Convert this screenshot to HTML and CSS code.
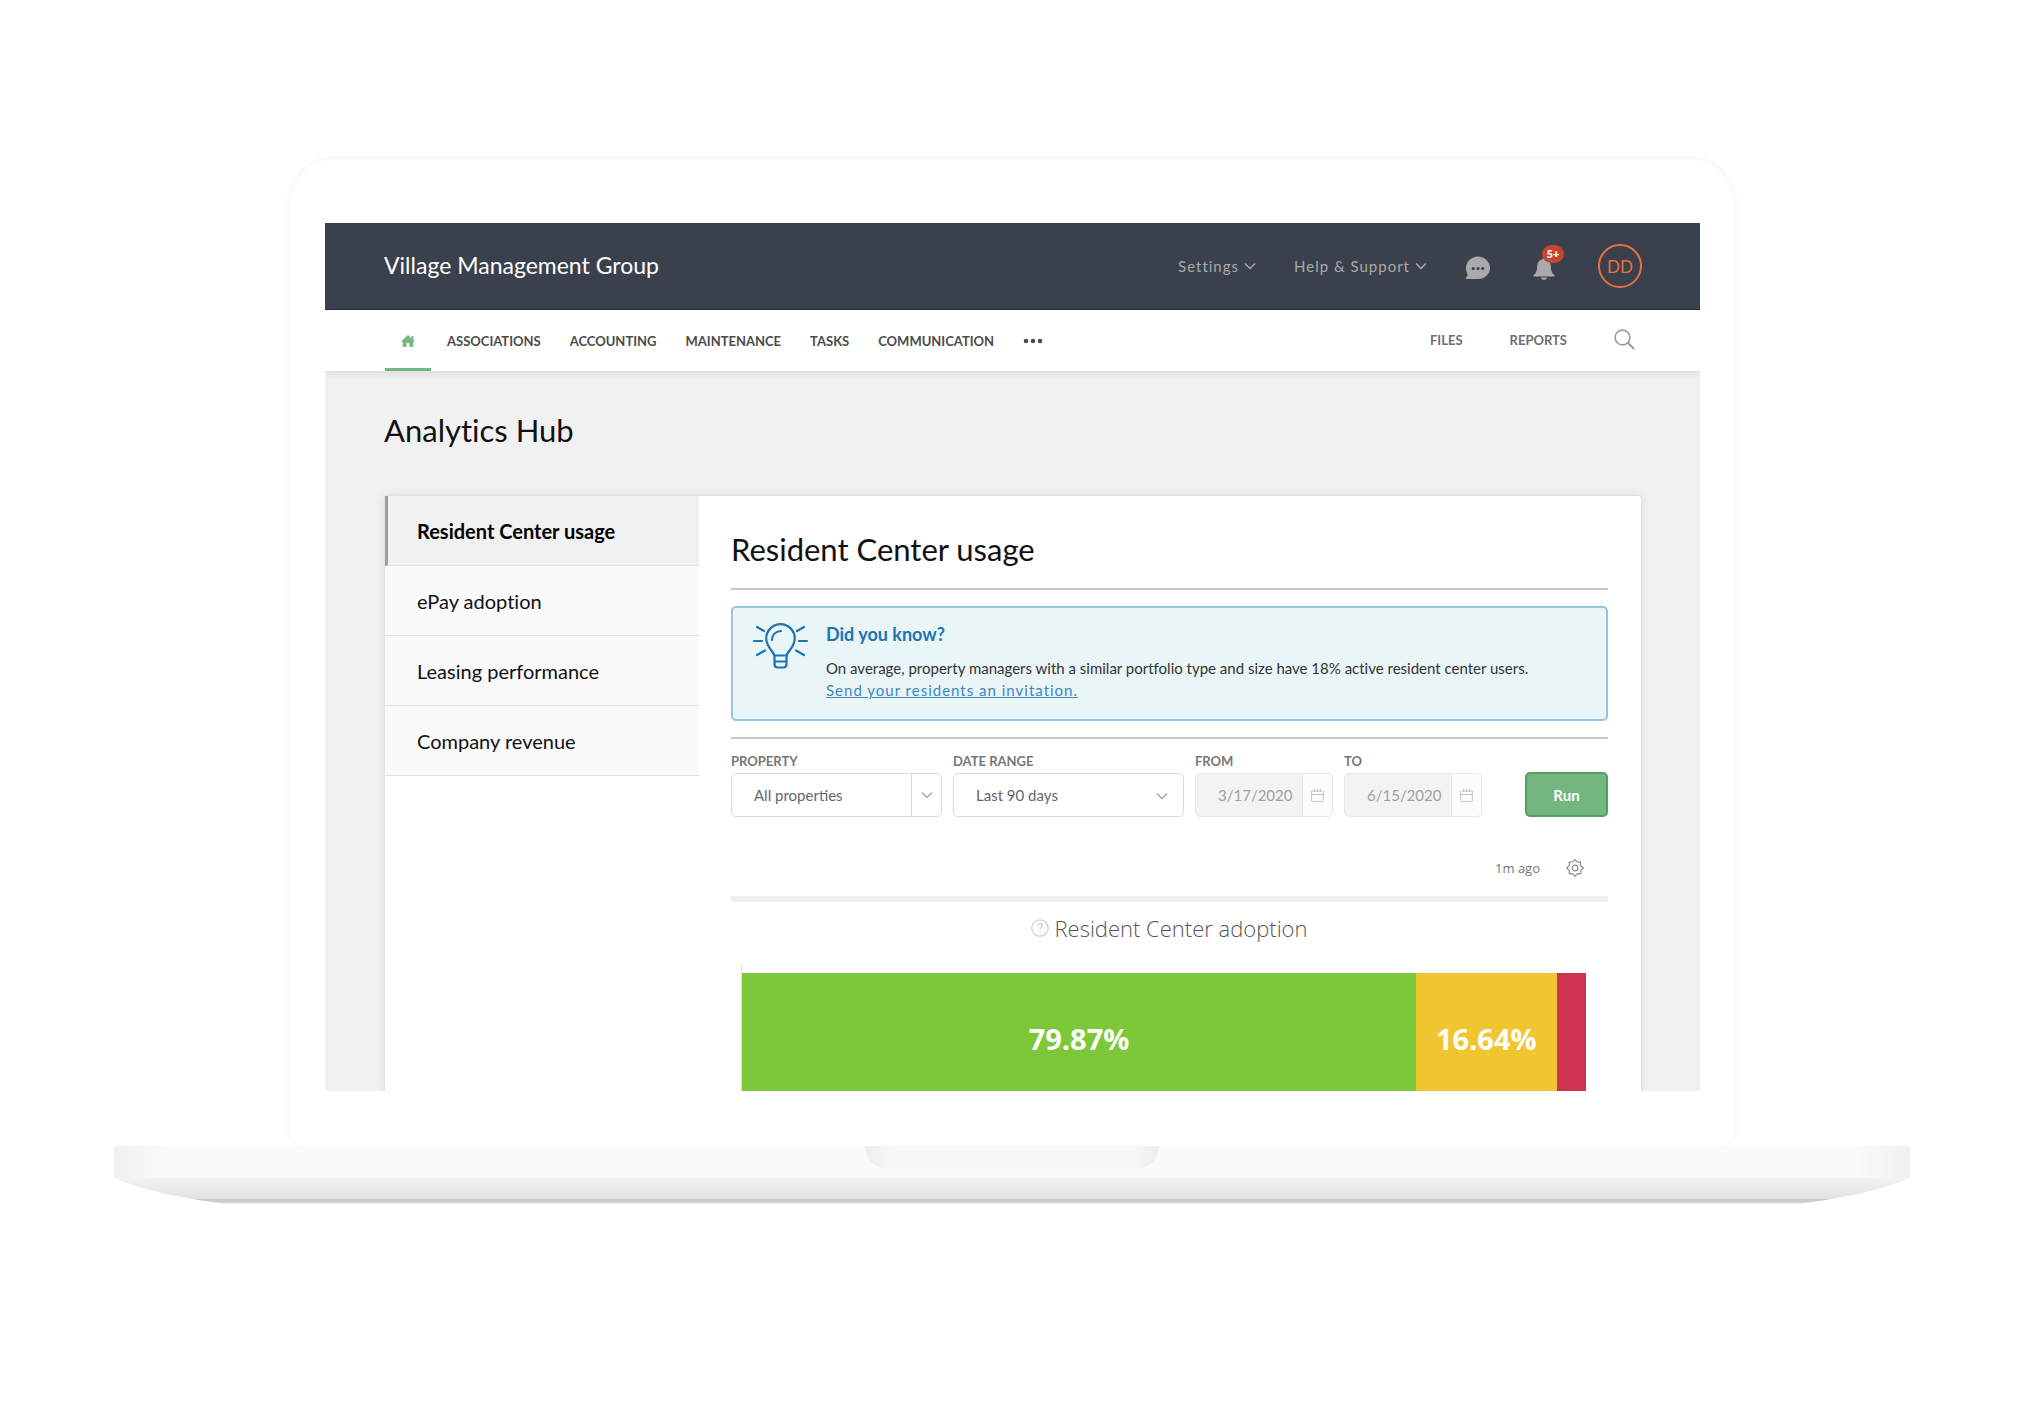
FILE: index.html
```html
<!DOCTYPE html>
<html lang="en">
<head>
    <meta charset="UTF-8">
    <meta name="viewport" content="width=device-width, initial-scale=1.0">
    <title>Analytics Hub</title>
    <link rel="stylesheet" href="styles.css">
</head>
<body>

<div class="laptop">
    <div class="lid">
        <div class="screen">

            <!-- Top bar -->
            <header class="topbar">
                <div class="company">Village Management Group</div>
                <div class="topbar-menu">
                    <button class="menu-btn">Settings
                        <svg class="chevron" viewBox="0 0 12 8"><path d="M1 1.5l5 5 5-5"/></svg>
                    </button>
                    <button class="menu-btn">Help &amp; Support
                        <svg class="chevron" viewBox="0 0 12 8"><path d="M1 1.5l5 5 5-5"/></svg>
                    </button>
                    <button class="icon-btn chat" aria-label="Messages">
                        <svg width="25" height="24" viewBox="0 0 25 24">
                            <path fill="#a9a9a9" d="M13 .5C6.500.5 1 5.500 1 12c0 2.800.8 5 1.800 6.700L.8 22c-.4.600-.1 1 .5 1h11.700c6.500 0 12-4.800 12-11S19.500.5 13 .5z"/>
                            <circle cx="8.200" cy="12.500" r="1.600" fill="#3b404d"/>
                            <circle cx="13" cy="12.500" r="1.600" fill="#3b404d"/>
                            <circle cx="17.800" cy="12.500" r="1.600" fill="#3b404d"/>
                        </svg>
                    </button>
                    <button class="icon-btn bell" aria-label="Notifications">
                        <svg width="22" height="23" viewBox="0 0 22 23">
                            <path fill="#a9a9a9" d="M9 2.500C9 1 13 1 13 2.500c3.500 1 4.700 3.800 4.900 7.500.2 4 .9 6 3.200 7.800.9.700.6 1.700-.4 1.700H1.300c-1 0-1.300-1-.4-1.700C3.200 16 3.900 14 4.100 10c.2-3.700 1.400-6.500 4.900-7.500zM8 20.500h6c0 1.500-1.300 2.300-3 2.300s-3-.8-3-2.300z"/>
                        </svg>
                        <span class="badge">5+</span>
                    </button>
                    <button class="avatar">DD</button>
                </div>
            </header>

            <!-- Main navigation -->
            <nav class="navbar">
                <div class="nav-left">
                    <a href="#home" class="home" aria-label="Home">
                        <svg width="14" height="12" viewBox="0 0 14 12"><path fill="#74b780" d="M7 0L0 6.500h1.700V12h3.800V8h3v4h3.800V6.500H14l-1.600-1.500V1h-2v2.200z"/></svg>
                    </a>
                    <a href="#associations">ASSOCIATIONS</a>
                    <a href="#accounting">ACCOUNTING</a>
                    <a href="#maintenance">MAINTENANCE</a>
                    <a href="#tasks">TASKS</a>
                    <a href="#communication">COMMUNICATION</a>
                    <a href="#more" aria-label="More">
                        <svg width="20" height="6" viewBox="0 0 20 6" fill="#4b4b4b"><circle cx="3" cy="3" r="2.300"/><circle cx="10" cy="3" r="2.300"/><circle cx="17" cy="3" r="2.300"/></svg>
                    </a>
                </div>
                <div class="nav-right">
                    <a href="#files">FILES</a>
                    <a href="#reports">REPORTS</a>
                    <button class="icon-btn" aria-label="Search">
                        <svg width="21" height="21" viewBox="0 0 21 21" fill="none" stroke="#9c9c9c" stroke-width="1.700"><circle cx="8.500" cy="8.500" r="7.400"/><path d="M13.800 13.800l6.200 6.200" stroke-width="2"/></svg>
                    </button>
                </div>
            </nav>

            <!-- Page -->
            <main class="page">
                <h1>Analytics Hub</h1>

                <div class="card">
                    <aside class="sidebar">
                        <a href="#resident" class="selected">Resident Center usage</a>
                        <a href="#epay">ePay adoption</a>
                        <a href="#leasing">Leasing performance</a>
                        <a href="#revenue">Company revenue</a>
                    </aside>

                    <section class="content">
                        <h2>Resident Center usage</h2>

                        <div class="tip">
                            <svg class="bulb" width="56" height="46" viewBox="0 0 56 46">
                                <path d="M21.500 32.500c-.6-3.500-8.300-8.500-8.300-17a14.300 14.300 0 0 1 28.600 0c0 8.500-7.700 13.500-8.300 17z"/>
                                <path d="M19 17c0-5 3.500-8.500 9-9"/>
                                <path d="M21.500 32.500v8.500c0 2 1 3.500 3 3.500h6c2 0 3-1.500 3-3.500v-8.500M21.500 38.500h12"/>
                                <path d="M1 18h8M46 18h8M4 4l7 4M51 4l-7 4M4 32l8-4.500M51 32l-8-4.500"/>
                            </svg>
                            <div>
                                <h3>Did you know?</h3>
                                <p>On average, property managers with a similar portfolio type and size have 18% active resident center users.</p>
                                <p><a href="#invite">Send your residents an invitation.</a></p>
                            </div>
                        </div>

                        <form class="filters">
                            <div class="field property">
                                <label for="property">PROPERTY</label>
                                <div class="control">
                                    <select id="property"><option>All properties</option></select>
                                    <span class="addon"><svg class="chevron" viewBox="0 0 12 8"><path d="M1 1.500l5 5 5-5"/></svg></span>
                                </div>
                            </div>
                            <div class="field range">
                                <label for="range">DATE RANGE</label>
                                <div class="control">
                                    <select id="range"><option>Last 90 days</option></select>
                                    <span class="arrow"><svg class="chevron" viewBox="0 0 12 8"><path d="M1 1.500l5 5 5-5"/></svg></span>
                                </div>
                            </div>
                            <div class="field date">
                                <label for="from">FROM</label>
                                <div class="control disabled">
                                    <input type="text" id="from" value="3/17/2020" disabled>
                                    <span class="addon">
                                        <svg width="13" height="13" viewBox="0 0 13 13" fill="none" stroke="#c4c4c4"><rect x=".6" y="2" width="11.800" height="10.400" rx="1"/><path d="M.6 5.500h11.800M3.500 0v3M6.500 0v3M9.500 0v3"/></svg>
                                    </span>
                                </div>
                            </div>
                            <div class="field date">
                                <label for="to">TO</label>
                                <div class="control disabled">
                                    <input type="text" id="to" value="6/15/2020" disabled>
                                    <span class="addon">
                                        <svg width="13" height="13" viewBox="0 0 13 13" fill="none" stroke="#c4c4c4"><rect x=".6" y="2" width="11.800" height="10.400" rx="1"/><path d="M.6 5.500h11.800M3.500 0v3M6.500 0v3M9.500 0v3"/></svg>
                                    </span>
                                </div>
                            </div>
                            <button type="button" class="run">Run</button>
                        </form>

                        <div class="report-tools">
                            <span>1m ago</span>
                            <button class="icon-btn" aria-label="Report settings">
                                <svg width="18" height="18" viewBox="0 0 18 18" fill="none" stroke="#8c8c8c" stroke-width="1.200">
                                    <path stroke-linejoin="round" d="M9 .7l1.800 2 .7.300 2.700-.2.300.3-.2 2.700.3.700L17.300 9l-2.300 2.100-.3.700.2 2.700-.5.400-2.600-.2-.8.400L9 17.300l-1.900-2.200-.8-.4-2.700.2-.4-.4.200-2.700-.4-.7L.7 9l2.300-2.300.4-.7-.2-2.800.4-.4 2.700.2.700-.3z"/>
                                    <circle cx="9" cy="9" r="2.800"/>
                                </svg>
                            </button>
                        </div>

                        <div class="chart">
                            <div class="chart-title">
                                <svg width="18" height="18" viewBox="0 0 18 18" fill="none" stroke="#cfcfcf" stroke-width="1.200"><circle cx="9" cy="9" r="8.200"/><path d="M6.800 7c0-3 4.500-3 4.500-.3 0 1.600-2.200 1.800-2.200 3.600M9.100 11.800v1.400"/></svg>
                                Resident Center adoption
                            </div>
                            <div class="plot">
                                <div class="bar green" style="width: 79.87%">79.87%</div>
                                <div class="bar yellow" style="width: 16.64%">16.64%</div>
                                <div class="bar red" style="width: 3.49%"></div>
                            </div>
                        </div>
                    </section>
                </div>
            </main>

        </div>
    </div>

    <!-- Laptop base -->
    <div class="deck"><div class="notch"></div></div>
    <svg class="underside" viewBox="0 0 1796 26" preserveAspectRatio="none">
        <defs>
            <linearGradient id="shade" x1="0" y1="0" x2="0" y2="1">
                <stop offset="0" stop-color="#f2f2f2"/>
                <stop offset=".8" stop-color="#e3e3e3"/>
                <stop offset=".8" stop-color="#c6c6c6"/>
                <stop offset=".92" stop-color="#cfcfcf"/>
                <stop offset="1" stop-color="#f4f4f4"/>
            </linearGradient>
        </defs>
        <path fill="url(#shade)" d="M0 0C30 12 60 19 112 26H1684C1736 19 1766 12 1796 0Z"/>
    </svg>
</div>

</body>
</html>
```
FILE: styles.css
```css
/* Reset */
* {
    margin: 0;
    padding: 0;
    box-sizing: border-box;
}

body {
    background-color: #fff;
    color: #111;
    font-family: Lato, "Open Sans", sans-serif;
    font-variant-ligatures: none;
}

a {
    color: inherit;
    text-decoration: none;
}

button {
    font-family: inherit;
    background: none;
    border: none;
    cursor: pointer;
}

svg {
    display: block;
}

/* Laptop */
.laptop {
    padding: 156px 113px 0 114px;
}

.lid {
    margin: 0 173px;
    padding: 63px 33px 55px 34px;
    border: 4px solid #fafafa;
    border-bottom: none;
    border-radius: 46px 46px 16px 16px;
}

.screen {
    background-color: #f1f1f1;
    overflow: hidden;
}

.deck {
    height: 32px;
    background: linear-gradient(90deg, #f0f0f0, #fafafa 54px, #fafafa calc(100% - 54px), #f0f0f0);
}

.notch {
    width: 294px;
    height: 23px;
    margin: 0 auto;
    border-radius: 0 0 24px 24px;
    background: linear-gradient(90deg, #ececec, #f7f7f7 24px, #f7f7f7 calc(100% - 24px), #ececec);
}

.underside {
    width: 100%;
    height: 26px;
}

/* Top bar */
.topbar {
    display: flex;
    justify-content: space-between;
    align-items: center;
    height: 87px;
    padding: 0 58px 0 59px;
    background-color: #3b404d;
    border-bottom: 1px solid #2b2e3c;
}

.company {
    padding-bottom: 2px;
    font-size: 23px;
    color: #fff;
}

.topbar-menu {
    display: flex;
    align-items: center;
}

.menu-btn {
    display: flex;
    align-items: center;
    gap: 5px;
    margin-right: 38px;
    font-size: 15px;
    letter-spacing: 1px;
    color: #a9a9a9;
}

.chevron {
    width: 12px;
    height: 8px;
    fill: none;
    stroke: #a9a9a9;
    stroke-width: 1.5;
}

.chat,
.bell {
    padding-top: 4px;
    margin-right: 43px;
}

.bell {
    position: relative;
}

.badge {
    position: absolute;
    top: -8px;
    left: 9px;
    width: 22px;
    height: 18px;
    border-radius: 9px;
    background-color: #c64532;
    color: #fff;
    font-size: 11px;
    font-weight: 900;
    line-height: 18px;
}

.avatar {
    width: 44px;
    height: 44px;
    border: 2px solid #ec6f42;
    border-radius: 50%;
    color: #ec6f42;
    font-size: 17px;
}

/* Navigation */
.navbar {
    position: relative;
    display: flex;
    justify-content: space-between;
    height: 61px;
    padding: 0 65px 0 60px;
    background-color: #fff;
    box-shadow: 0 2px 8px rgba(0, 0, 0, 0.1);
    font-size: 13px;
    font-weight: bold;
    color: #4b4b4b;
}

.nav-left,
.nav-right {
    display: flex;
    align-items: center;
    gap: 29px;
}

.nav-right {
    gap: 47px;
    padding-bottom: 2px;
    color: #6e6e6e;
}

.home {
    display: flex;
    align-items: center;
    justify-content: center;
    width: 46px;
    height: 61px;
    margin-right: -13px;
    border-top: 3px solid transparent;
    border-bottom: 3px solid #74b780;
}

/* Page */
.page {
    padding: 38px 58px 0 59px;
}

h1,
h2 {
    font-size: 31px;
    font-weight: normal;
    line-height: 42px;
}

.card {
    display: flex;
    margin-top: 44px;
    background-color: #fff;
    border: 1px solid #e2e2e2;
    border-bottom: none;
    border-radius: 4px 4px 0 0;
    box-shadow: 0 0 12px rgba(0, 0, 0, 0.08);
}

.sidebar {
    width: 314px;
}

.sidebar a {
    display: flex;
    align-items: center;
    height: 70px;
    padding-left: 32px;
    background-color: #fafafa;
    border-bottom: 1px solid #e2e2e2;
    font-size: 20px;
}

.sidebar .selected {
    padding-left: 29px;
    border-left: 3px solid #9c9c9c;
    background-color: #f1f1f1;
    color: #000;
    font-weight: bold;
}

.content {
    flex: 1;
    padding: 32px 33px 0 32px;
}

.content h2 {
    padding-bottom: 18px;
    border-bottom: 2px solid #c8c8c8;
}

/* Tip box */
.tip {
    display: flex;
    gap: 17px;
    margin: 16px 0;
    padding: 15px 20px 18px;
    background-color: #eaf5f8;
    border: 2px solid #95c5e2;
    border-radius: 5px;
    font-size: 15px;
    line-height: 22px;
    color: #333;
}

.bulb {
    fill: none;
    stroke: #1b74b4;
    stroke-width: 2.2;
    stroke-linecap: round;
    stroke-linejoin: round;
}

.tip h3 {
    margin-bottom: 12px;
    font-size: 18px;
    color: #1b74b4;
}

.tip a {
    color: #3d87bd;
    letter-spacing: 1px;
    text-decoration: underline;
}

/* Filters */
.filters {
    display: flex;
    align-items: flex-end;
    gap: 11px;
    padding-top: 14px;
    border-top: 2px solid #c8c8c8;
}

.field label {
    display: block;
    margin-bottom: 4px;
    font-size: 13px;
    font-weight: bold;
    line-height: 16px;
    color: #777;
}

.control {
    position: relative;
    display: flex;
    height: 44px;
    border: 1px solid #dcdcdc;
    border-radius: 5px;
    background-color: #fff;
    overflow: hidden;
}

.property {
    width: 211px;
}

.range {
    width: 231px;
}

.date {
    width: 138px;
}

.control.disabled {
    border-color: #e8e8e8;
    background-color: #f3f3f3;
}

.control select,
.control input {
    flex: 1;
    min-width: 0;
    padding-left: 22px;
    appearance: none;
    border: none;
    background: none;
    font-family: inherit;
    font-size: 15px;
    color: #666;
}

.control input {
    color: #a0a0a0;
}

.addon {
    display: flex;
    align-items: center;
    justify-content: center;
    width: 30px;
    border-left: 1px solid #dcdcdc;
}

.disabled .addon {
    border-color: #e8e8e8;
    background-color: #fcfcfc;
}

.arrow {
    position: absolute;
    top: 18px;
    right: 15px;
    pointer-events: none;
}

.run {
    width: 83px;
    height: 45px;
    margin-left: auto;
    background-color: #73b680;
    border: 2px solid #51a060;
    border-radius: 5px;
    color: #fff;
    font-size: 15px;
    font-weight: bold;
}

/* Report */
.report-tools {
    display: flex;
    justify-content: flex-end;
    align-items: center;
    gap: 26px;
    height: 79px;
    padding: 22px 24px 0 0;
    font-family: "Open Sans", sans-serif;
    font-size: 13px;
    color: #777;
}

.chart {
    border-top: 6px solid #f0f0f0;
    font-family: "Open Sans", sans-serif;
}

.chart-title {
    display: flex;
    align-items: center;
    justify-content: center;
    gap: 5px;
    height: 52px;
    font-size: 22px;
    font-weight: 300;
    color: #555;
}

.plot {
    display: flex;
    margin: 11px 22px 0 10px;
    padding-top: 8px;
    border-left: 1px solid #cfe2f0;
}

.bar {
    display: flex;
    align-items: center;
    justify-content: center;
    height: 118px;
    padding-top: 12px;
    color: #fff;
    font-size: 29px;
    font-weight: bold;
}

.green {
    background-color: #7dc838;
}

.yellow {
    background-color: #f0c630;
}

.red {
    background-color: #d13151;
}
```
